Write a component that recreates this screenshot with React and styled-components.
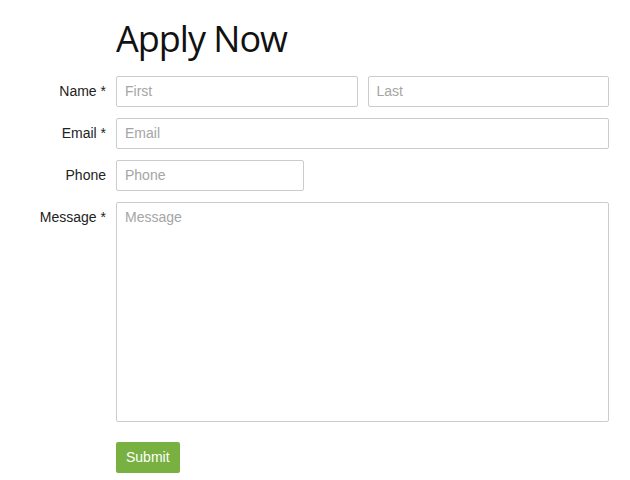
import React from "react";
import styled, { createGlobalStyle } from "styled-components";

const GlobalStyle = createGlobalStyle`
  body {
    margin: 0;
    background: #fff;
    font-family: "Liberation Sans", Arial, sans-serif;
    color: #222;
  }
`;

const Page = styled.div`
  padding: 15px 21px 0 8px;
`;

const FormGrid = styled.form`
  display: grid;
  grid-template-columns: 98px 1fr;
  column-gap: 10px;
  row-gap: 11px;
  align-items: start;
`;

const Heading = styled.h1`
  grid-column: 2;
  margin: 0 0 3px;
  font-family: "Open Sans", "Noto Sans", sans-serif;
  font-weight: 400;
  font-size: 36px;
  line-height: 47px;
  letter-spacing: -1px;
  color: #111;
`;

const Label = styled.label`
  grid-column: 1;
  text-align: right;
  font-size: 14px;
  line-height: 30px;
  color: #222;
`;

const Field = styled.div`
  grid-column: 2;
  display: flex;
  gap: 10px;
`;

const Input = styled.input`
  box-sizing: border-box;
  height: 31px;
  width: ${p => p.$width || "100%"};
  flex: ${p => (p.$width ? "none" : 1)};
  min-width: 0;
  padding: 0 8px 2px;
  border: 1px solid #ccc;
  border-radius: 2px;
  font-family: "Liberation Sans", Arial, sans-serif;
  font-size: 14px;
  color: #333;
  &::placeholder {
    color: #a5a5a5;
  }
`;

const TextArea = styled.textarea`
  grid-column: 2;
  box-sizing: border-box;
  height: 220px;
  width: 100%;
  padding: 6px 8px;
  border: 1px solid #ccc;
  border-radius: 2px;
  resize: none;
  font-family: "Liberation Sans", Arial, sans-serif;
  font-size: 14px;
  &::placeholder {
    color: #a5a5a5;
  }
`;

const SubmitButton = styled.button`
  grid-column: 2;
  justify-self: start;
  margin-top: 9px;
  height: 31px;
  padding: 0 10px 2px;
  border: none;
  border-radius: 2px;
  background: #78b041;
  color: #fff;
  font-family: "Liberation Sans", Arial, sans-serif;
  font-size: 14px;
`;

export default function App() {
  return (
    <>
      <GlobalStyle />
      <Page>
        <FormGrid onSubmit={e => e.preventDefault()}>
          <Heading>Apply Now</Heading>

          <Label>Name *</Label>
          <Field>
            <Input placeholder="First" />
            <Input placeholder="Last" />
          </Field>

          <Label>Email *</Label>
          <Field>
            <Input placeholder="Email" />
          </Field>

          <Label>Phone</Label>
          <Field>
            <Input placeholder="Phone" $width="188px" />
          </Field>

          <Label>Message *</Label>
          <TextArea placeholder="Message" />

          <SubmitButton type="submit">Submit</SubmitButton>
        </FormGrid>
      </Page>
    </>
  );
}
